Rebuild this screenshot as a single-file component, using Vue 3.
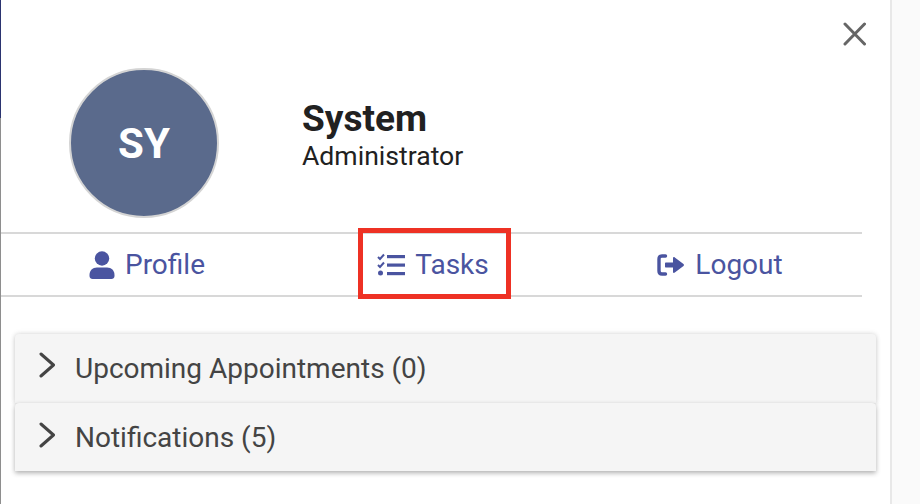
<script setup>
const links = [
  { name: 'Profile', icon: 'user' },
  { name: 'Tasks', icon: 'tasks', marked: true },
  { name: 'Logout', icon: 'logout' }
];
const sections = ['Upcoming Appointments (0)', 'Notifications (5)'];
</script>

<template>
  <div class="page">
    <div class="edge">
      <div class="edge-top"></div>
      <div class="edge-rest"></div>
    </div>
    <div class="panel">
      <div class="close-row">
        <svg class="close" viewBox="0 0 24 24" width="24" height="24">
          <path d="M3 2 L22.500 22 M22.500 2 L3 22" stroke="#666" stroke-width="3" stroke-linecap="round" fill="none" />
        </svg>
      </div>
      <div class="user">
        <div class="avatar">SY</div>
        <div class="who">
          <div class="name">System</div>
          <div class="role">Administrator</div>
        </div>
      </div>
      <div class="nav">
        <a v-for="link in links" :key="link.name" class="nav-item" :class="{ marked: link.marked }">
          <svg v-if="link.icon === 'user'" width="26" height="28" viewBox="0 0 26 28">
            <circle cx="13" cy="7.500" r="7.200" fill="#4a54a0" />
            <path d="M8 16.500 H18 C22.500 16.500 25.500 19.500 25.500 24 V25 C25.500 26.800 24 28 22.500 28 H3.500 C2 28 0.500 26.800 0.500 25 V24 C0.500 19.500 3.500 16.500 8 16.500 Z" fill="#4a54a0" />
          </svg>
          <svg v-else-if="link.icon === 'tasks'" width="28" height="24" viewBox="0 0 28 24">
            <path d="M1 4 L3 6 L7 1.500 M1 12 L3 14 L7 9.500" stroke="#4a54a0" stroke-width="2" fill="none" />
            <circle cx="3.500" cy="20" r="2.500" fill="#4a54a0" />
            <rect x="10" y="2" width="18" height="3.200" fill="#4a54a0" />
            <rect x="10" y="10.500" width="18" height="3.200" fill="#4a54a0" />
            <rect x="10" y="19" width="18" height="3.200" fill="#4a54a0" />
          </svg>
          <svg v-else width="28" height="22" viewBox="0 0 28 22">
            <path d="M8.500 2 H5 C3 2 2 3 2 5 V17 C2 19 3 20 5 20 H8.500" stroke="#4a54a0" stroke-width="3.400" stroke-linecap="round" fill="none" />
            <path d="M9 8.500 H16 V4 C16 3 17 2.700 17.800 3.400 L26.500 10 C27.100 10.500 27.100 11.500 26.500 12 L17.800 18.600 C17 19.300 16 19 16 18 V13.500 H9 C8.400 13.500 8 13.100 8 12.500 V9.500 C8 8.900 8.400 8.500 9 8.500 Z" fill="#4a54a0" />
          </svg>
          <span>{{ link.name }}</span>
          <div v-if="link.marked" class="mark"></div>
        </a>
      </div>
      <div class="sections">
        <div v-for="section in sections" :key="section" class="section">
          <svg width="18" height="26" viewBox="0 0 18 26">
            <path d="M4 2 L16.500 13 L4 24" stroke="#444" stroke-width="3" stroke-linecap="round" stroke-linejoin="round" fill="none" />
          </svg>
          <span>{{ section }}</span>
        </div>
      </div>
    </div>
    <div class="backdrop"></div>
  </div>
</template>

<style>
html, body {
  margin: 0;
  background: #fff;
}
</style>

<style scoped>
.page {
  display: flex;
  width: 920px;
  height: 504px;
  overflow: hidden;
  font-family: Roboto, "Liberation Sans", sans-serif;
}

.edge {
  width: 1px;
  display: flex;
  flex-direction: column;
}

.edge-top {
  height: 118px;
  background: #2b3470;
}

.edge-rest {
  flex: 1;
  background: #8e8e8e;
}

.panel {
  width: 889px;
  box-sizing: border-box;
  padding-right: 28px;
}

.backdrop {
  flex: 1;
  background: #fafafa;
  border-left: 2px solid #e8e8e8;
}

.close-row {
  display: flex;
  justify-content: flex-end;
  padding-top: 22px;
  margin-right: -4px;
}

.user {
  display: flex;
  align-items: center;
  margin-top: 22px;
  padding-left: 68px;
}

.avatar {
  width: 150px;
  height: 150px;
  box-sizing: border-box;
  border: 2px solid #d4d4d4;
  border-radius: 50%;
  background: #5a6a8c;
  color: #fff;
  font-size: 42px;
  font-weight: 700;
  display: flex;
  align-items: center;
  justify-content: center;
}

.who {
  margin-left: 83px;
  margin-bottom: 18px;
  color: #212121;
}

.name {
  font-size: 37px;
  font-weight: 700;
  line-height: 43px;
}

.role {
  font-size: 26.600px;
  line-height: 32px;
}

.nav {
  display: grid;
  grid-template-columns: repeat(3, 1fr);
  justify-items: center;
  margin-top: 14px;
  height: 61px;
  padding-left: 3px;
  border-top: 2px solid #d8d8d8;
  border-bottom: 2px solid #d8d8d8;
}

.nav-item {
  position: relative;
  display: flex;
  align-items: center;
  gap: 10px;
  color: #4a54a0;
  font-size: 28px;
}

.nav-item:last-child {
  margin-left: 2px;
}

.mark {
  position: absolute;
  left: -19px;
  right: -22px;
  top: -6px;
  bottom: -4px;
  border: 5px solid #ee3124;
}

.sections {
  margin: 37px -14px 0 14px;
}

.section {
  display: flex;
  align-items: center;
  gap: 20px;
  height: 68.500px;
  box-sizing: border-box;
  padding-left: 22px;
  background: #f5f5f5;
  color: #444;
  font-size: 28px;
  box-shadow: 0 2px 5px rgba(0, 0, 0, 0.32);
  border-radius: 4px 4px 0 0;
  position: relative;
}

.section:first-child {
  box-shadow: 0 -1px 6px rgba(0, 0, 0, 0.05), 0 1px 5px rgba(0, 0, 0, 0.2);
}

.section + .section {
  padding-top: 2px;
}

.section svg {
  margin-bottom: 6px;
}
</style>
